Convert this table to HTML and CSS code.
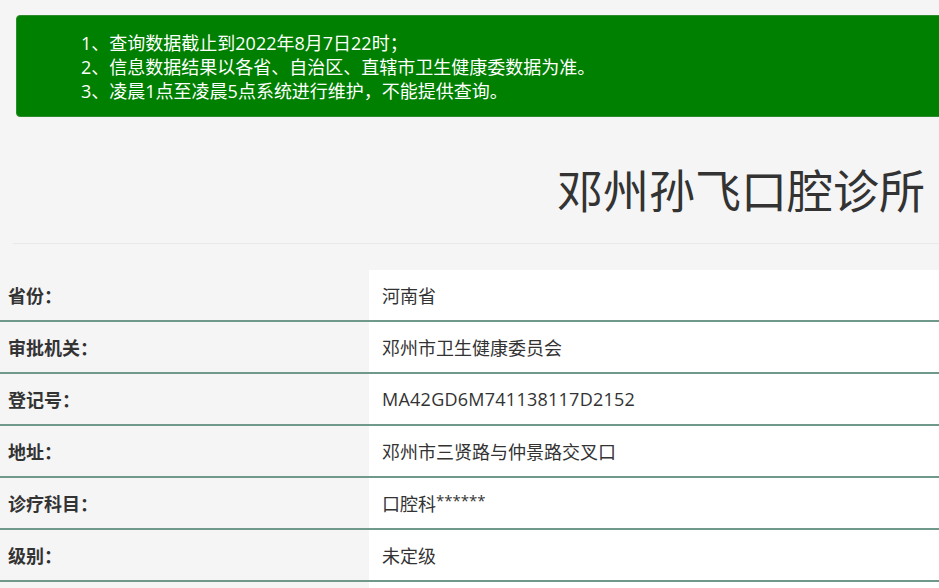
FILE: index.html
```html
<!DOCTYPE html>
<html lang="zh-CN">
<head>
<meta charset="utf-8">
<title>邓州孙飞口腔诊所</title>
<link rel="stylesheet" href="styles.css">
</head>
<body>
<div class="notice">
  <p>1、查询数据截止到2022年8月7日22时；</p>
  <p>2、信息数据结果以各省、自治区、直辖市卫生健康委数据为准。</p>
  <p>3、凌晨1点至凌晨5点系统进行维护，不能提供查询。</p>
</div>
<h1 class="title">邓州孙飞口腔诊所</h1>
<div class="info">
  <div class="row"><div class="label">省份：</div><div class="value">河南省</div></div>
  <div class="row"><div class="label">审批机关：</div><div class="value">邓州市卫生健康委员会</div></div>
  <div class="row"><div class="label">登记号：</div><div class="value code">MA42GD6M741138117D2152</div></div>
  <div class="row"><div class="label">地址：</div><div class="value">邓州市三贤路与仲景路交叉口</div></div>
  <div class="row"><div class="label">诊疗科目：</div><div class="value">口腔科<span class="stars">******</span></div></div>
  <div class="row"><div class="label">级别：</div><div class="value">未定级</div></div>
  <div class="row"><div class="label">&nbsp;</div><div class="value">&nbsp;</div></div>
</div>
</body>
</html>
```
FILE: styles.css
```css
html, body {
  margin: 0;
  padding: 0;
  background: #f5f5f5;
  font-family: "Open Sans", "Noto Sans CJK SC", sans-serif;
  color: #333;
  overflow: hidden;
}
.notice {
  margin: 15px -10px 0 16px;
  padding: 15px 0 13px 64px;
  background: #008000;
  border: 1px solid #2e8b2e;
  border-radius: 4px;
  color: #fff;
  font-size: 18px;
  line-height: 24px;
}
.notice p {
  margin: 0;
}
.title {
  margin: 44px 0 0 13px;
  padding: 0 14px 24px 0;
  border-bottom: 1px solid #e8e8e8;
  text-align: right;
  font-size: 46px;
  font-weight: 400;
  line-height: 58px;
  color: #333;
}
.info {
  margin-top: 26px;
}
.row {
  display: flex;
  height: 50px;
  border-bottom: 2px solid #6f9a8b;
}
.label {
  width: 369px;
  padding-left: 8px;
  box-sizing: border-box;
  display: flex;
  align-items: center;
  font-size: 18px;
  font-weight: 700;
  color: #333;
  background: #f5f5f5;
}
.value {
  flex: 1;
  padding-left: 13px;
  display: flex;
  align-items: center;
  font-size: 18px;
  color: #333;
  background: #fff;
}
.code {
  letter-spacing: 0.25px;
}
.stars {
  font-size: 15px;
  align-self: flex-start;
  margin-top: 12px;
}
```
